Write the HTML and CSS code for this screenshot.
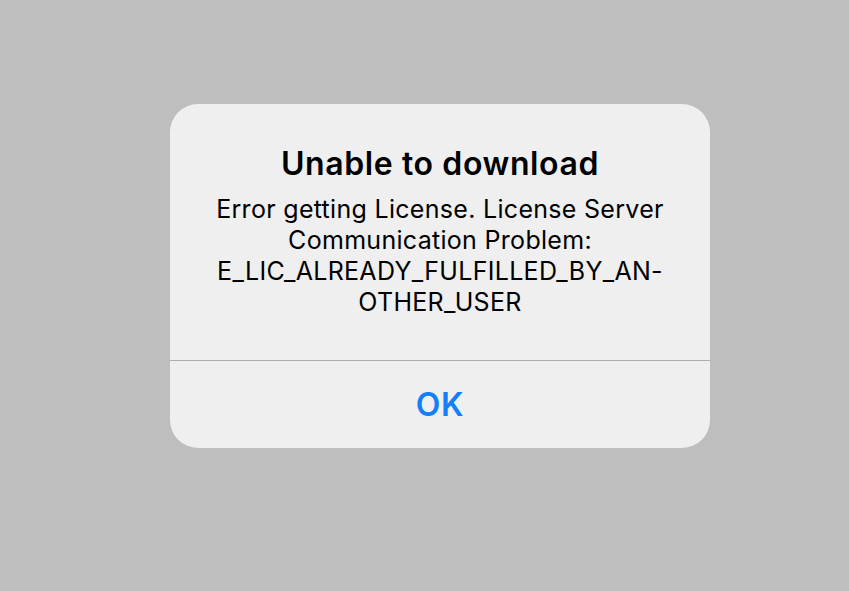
FILE: index.html
```html
<!DOCTYPE html>
<html>
<head>
<meta charset="utf-8">
<link rel="stylesheet" href="styles.css">
</head>
<body>
<div class="stage">
  <div class="alert">
    <div class="alert-content">
      <div class="alert-title">Unable to download</div>
      <div class="alert-message">
        <span class="line">Error getting License. License Server</span>
        <span class="line">Communication Problem:</span>
        <span class="line">E_LIC_ALREADY_FULFILLED_BY_AN-</span>
        <span class="line">OTHER_USER</span>
      </div>
    </div>
    <div class="alert-actions">
      <button class="alert-button">OK</button>
    </div>
  </div>
</div>
</body>
</html>
```
FILE: styles.css
```css
html, body {
  margin: 0;
  padding: 0;
  background: #bebebe;
}
body {
  width: 849px;
  height: 591px;
  overflow: hidden;
  font-family: Inter, "Noto Sans", "Liberation Sans", sans-serif;
}
.stage {
  padding-top: 104px;
  padding-left: 170px;
}
.alert {
  width: 540px;
  height: 344px;
  background: #efefef;
  border-radius: 28px;
  display: flex;
  flex-direction: column;
  overflow: hidden;
}
.alert-content {
  height: 257px;
  flex: none;
  box-sizing: border-box;
  padding-top: 42px;
  display: flex;
  flex-direction: column;
  align-items: center;
  border-bottom: 1px solid #adadad;
}
.alert-title {
  font-size: 32px;
  font-weight: 600;
  color: #000;
  line-height: 36px;
  letter-spacing: 0.6px;
}
.alert-message {
  margin-top: 12px;
  display: flex;
  flex-direction: column;
  align-items: center;
  font-size: 25px;
  line-height: 31px;
  letter-spacing: 0.3px;
  color: #000;
}
.line {
  display: block;
  white-space: nowrap;
}
.alert-actions {
  flex: 1;
  display: flex;
  align-items: center;
  justify-content: center;
}
.alert-button {
  background: none;
  border: none;
  padding: 0;
  font-family: inherit;
  font-size: 32px;
  font-weight: 600;
  letter-spacing: 0.6px;
  color: #157efb;
  cursor: pointer;
}
```
